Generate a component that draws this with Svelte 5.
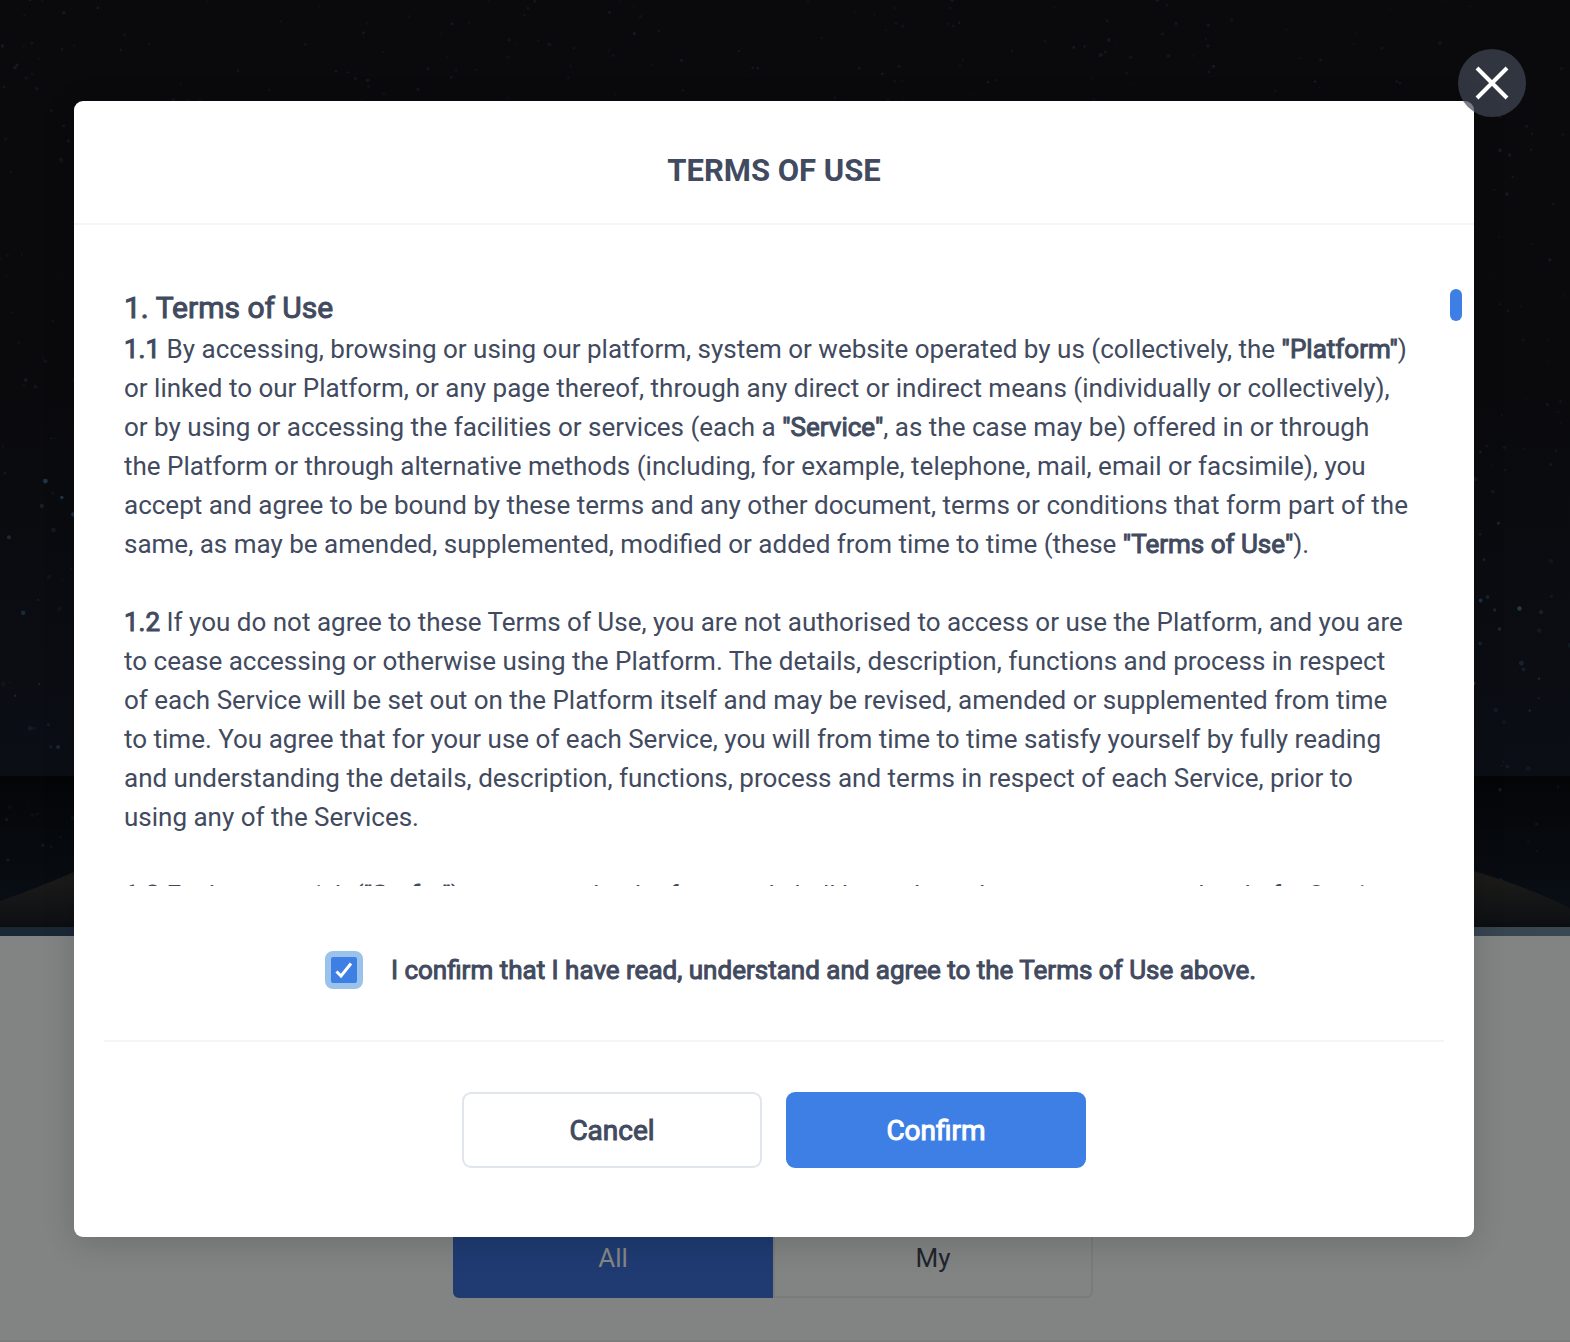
<script>
  let agreed = $state(true);

  // Deterministic scatter of faint stars behind the dialog.
  let seed = 7;
  const rand = () => {
    seed = (seed * 16807) % 2147483647;
    return seed / 2147483647;
  };
  const stars = Array.from({ length: 1300 }, () => {
    const y = rand() * 880;
    const bright = y > 480 && y < 775;
    return {
      x: rand() * 1570,
      y,
      r: 0.9 + rand() * (bright ? 1.5 : 1.1),
      o: bright ? 0.15 + rand() * rand() * 0.85 : 0.08 + rand() * 0.22
    };
  });
</script>

<div class="page">
  <div class="hero">
    <svg class="sky" viewBox="0 0 1570 927" preserveAspectRatio="none" aria-hidden="true">
      <defs>
        <linearGradient id="night" x1="0" y1="0" x2="0" y2="1">
          <stop offset="0" stop-color="#0a0a0c" />
          <stop offset="0.5" stop-color="#0a0a0d" />
          <stop offset="1" stop-color="#0b0e15" />
        </linearGradient>
        <linearGradient id="horizon" x1="0" y1="0" x2="0" y2="1">
          <stop offset="0" stop-color="#040507" />
          <stop offset="1" stop-color="#0a1017" />
        </linearGradient>
        <linearGradient id="planet" x1="0" y1="0" x2="0" y2="1">
          <stop offset="0" stop-color="#1d1b19" />
          <stop offset="0.7" stop-color="#1b1a19" />
          <stop offset="1" stop-color="#0c0f12" />
        </linearGradient>
      </defs>
      <rect width="1570" height="776" fill="url(#night)" />
      <rect y="776" width="1570" height="151" fill="url(#horizon)" />
      {#each stars as s}
        <circle cx={s.x} cy={s.y} r={s.r} fill="#28445c" opacity={s.o} />
      {/each}
      <path d="M0 901 Q38 888 74 872 L420 776 H1150 L1474 871 Q1530 888 1570 908 V927 H0Z" fill="url(#planet)" />
    </svg>
  </div>
  <div class="strip"></div>
  <section class="list">
    <div class="tabs">
      <button class="tab active">All</button>
      <button class="tab">My</button>
    </div>
  </section>
</div>

<div class="overlay">
  <div class="modal" role="dialog" aria-labelledby="dialog-title">
    <button class="close" aria-label="Close">
      <svg viewBox="0 0 68 68" aria-hidden="true">
        <path d="M19 19L49 49M49 19L19 49" stroke="#fff" stroke-width="4" />
      </svg>
    </button>
    <header><h1 id="dialog-title">TERMS OF USE</h1></header>

    <div class="content">
      <div class="scroller">
        <h2>1. Terms of Use</h2>
        <p>
          <b>1.1</b> By accessing, browsing or using our platform, system or website operated by us (collectively, the <b>"Platform"</b>)
          or linked to our Platform, or any page thereof, through any direct or indirect means (individually or collectively),
          or by using or accessing the facilities or services (each a <b>"Service"</b>, as the case may be) offered in or through
          the Platform or through alternative methods (including, for example, telephone, mail, email or facsimile), you
          accept and agree to be bound by these terms and any other document, terms or conditions that form part of the
          same, as may be amended, supplemented, modified or added from time to time (these <b>"Terms of Use"</b>).
        </p>
        <p>
          <b>1.2</b> If you do not agree to these Terms of Use, you are not authorised to access or use the Platform, and you are
          to cease accessing or otherwise using the Platform. The details, description, functions and process in respect
          of each Service will be set out on the Platform itself and may be revised, amended or supplemented from time
          to time. You agree that for your use of each Service, you will from time to time satisfy yourself by fully reading
          and understanding the details, description, functions, process and terms in respect of each Service, prior to
          using any of the Services.
        </p>
        <p>
          <b>1.3</b> Each usage risk (<b>"Surfer"</b>) may occur by the form and shall be and not the owner or usage level of a
          Service.
        </p>
      </div>
      <span class="thumb"></span>
    </div>

    <div class="agree">
      <label>
        <input type="checkbox" bind:checked={agreed} />
        <span class="box" aria-hidden="true">
          {#if agreed}
            <svg viewBox="0 0 26 26"><path d="M5.5 14.5L10 19L20 6.5" fill="none" stroke="#fff" stroke-width="3" /></svg>
          {/if}
        </span>
        <span class="statement">I confirm that I have read, understand and agree to the Terms of Use above.</span>
      </label>
    </div>

    <footer>
      <button class="action">Cancel</button>
      <button class="action primary">Confirm</button>
    </footer>
  </div>
</div>

<style>
  :global(body) {
    margin: 0;
    background: #828483;
  }

  .page,
  .overlay {
    font-family: Roboto, "Liberation Sans", sans-serif;
    color: #414a5e;
  }

  button {
    font-family: inherit;
    box-sizing: border-box;
    padding: 0;
    cursor: pointer;
  }

  .page {
    min-height: 100vh;
    display: flex;
    flex-direction: column;
  }

  .hero {
    height: 927px;
    background: #0a0a0c;
  }

  .sky {
    display: block;
    width: 100%;
    height: 100%;
  }

  .strip {
    height: 9px;
    background: linear-gradient(90deg, #1a2836, #1c2530 50%, #3a4854);
  }

  .list {
    flex: 1;
    display: flex;
    flex-direction: column;
    align-items: center;
    justify-content: flex-end;
    box-sizing: border-box;
    padding: 0 24px 42px 0;
    border-bottom: 2px solid #7c7e7d;
    background: #828483;
  }

  .tabs {
    display: flex;
    width: 640px;
  }

  .tab {
    flex: none;
    width: 50%;
    height: 80px;
    border: 2px solid #7a7c7b;
    border-radius: 0 6px 6px 0;
    background: transparent;
    font-size: 26px;
    color: #20242e;
  }

  .tab.active {
    border-color: #1f3b72;
    border-radius: 6px 0 0 6px;
    background: #1f3b72;
    color: #858784;
  }

  .overlay {
    position: absolute;
    inset: 0;
    padding: 101px 96px 105px 74px;
  }

  .modal {
    position: relative;
    border-radius: 9px;
    background: #fff;
    box-shadow: 0 6px 32px rgba(0, 0, 0, 0.16);
  }

  .close {
    position: absolute;
    top: -52px;
    right: -52px;
    width: 68px;
    height: 68px;
    border: 0;
    border-radius: 50%;
    background: rgba(65, 71, 86, 0.7);
  }

  .close svg {
    display: block;
    width: 68px;
    height: 68px;
  }

  header {
    padding: 46px 0 28px;
    border-bottom: 2px solid #f5f5f6;
    text-align: center;
  }

  h1 {
    margin: 0;
    font-size: 31px;
    line-height: 48px;
    font-weight: 700;
  }

  .content {
    position: relative;
    padding: 64px 64px 0 50px;
  }

  .scroller {
    height: 597px;
    overflow: hidden;
    font-size: 26px;
    line-height: 39px;
  }

  h2 {
    margin: 0 0 3px;
    font-size: 30px;
    line-height: 38px;
    font-weight: 400;
    -webkit-text-stroke: 1px;
  }

  p {
    margin: 0 0 39px;
  }

  b,
  .statement,
  .action {
    font-weight: 400;
    -webkit-text-stroke: 1px;
  }

  .thumb {
    position: absolute;
    top: 64px;
    right: 12px;
    width: 12px;
    height: 32px;
    border-radius: 6px;
    background: #3e7fe5;
  }

  .agree {
    margin: 0 30px;
    padding: 65px 0 51px 33px;
    border-bottom: 2px solid #f5f5f6;
    display: flex;
    justify-content: center;
  }

  label {
    display: flex;
    align-items: center;
    gap: 28px;
    font-size: 26px;
    line-height: 38px;
  }

  input {
    position: absolute;
    opacity: 0;
  }

  .box {
    width: 26px;
    height: 26px;
    border: 6px solid #9bc2ea;
    border-radius: 8px;
    background: #3e7fe5;
  }

  .box svg {
    display: block;
    width: 26px;
    height: 26px;
  }

  footer {
    display: flex;
    justify-content: center;
    gap: 24px;
    padding: 50px 0 69px;
  }

  .action {
    width: 300px;
    height: 76px;
    border: 2px solid #e1e5ee;
    border-radius: 9px;
    background: #fff;
    color: #414a5e;
    font-size: 28px;
  }

  .action.primary {
    border-color: #3e7fe5;
    background: #3e7fe5;
    color: #fff;
  }
</style>
